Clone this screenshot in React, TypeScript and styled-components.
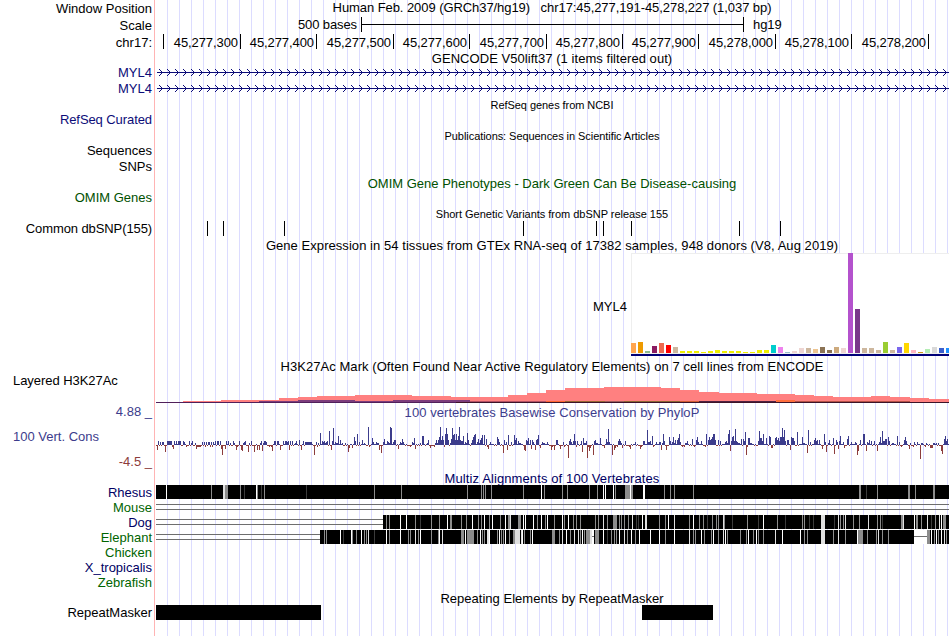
import React from 'react'
import styled, { createGlobalStyle } from 'styled-components'

const GlobalStyle = createGlobalStyle`
  body {
    margin: 0;
    background: #fff;
  }
`

const PLOT_WIDTH = 793

const colors = {
  black: '#000000',
  gene: '#0c0c78',
  omim: '#005000',
  align: '#000064',
  alignAlt: '#006400',
  consUp: '#3c3c8c',
  consDown: '#8c3c3c',
}

const Browser = styled.main`
  width: 949px;
  height: 636px;
  overflow: hidden;
  font-family: 'Liberation Sans', Arial, Helvetica, sans-serif;
  font-size: 13px;
  line-height: 15px;
  color: ${colors.black};
  background:
    linear-gradient(#ffb4b4, #ffb4b4) 154px 0 / 1px 100% no-repeat,
    repeating-linear-gradient(to right, #dcdcff 0 1px, transparent 1px 12px) 167px 0 / 792px 100% no-repeat;
`

const Row = styled.div<{ h: number }>`
  display: grid;
  grid-template-columns: 152px ${PLOT_WIDTH}px;
  column-gap: 4px;
  height: ${({ h }) => h}px;
`

const Label = styled.div<{ color?: string; top?: number; spacing?: number }>`
  padding-top: ${({ top }) => top || 0}px;
  text-align: right;
  white-space: pre;
  letter-spacing: ${({ spacing }) => spacing || 0}px;
  color: ${({ color }) => color || colors.black};
`

const Title = styled(Label)<{ small?: boolean }>`
  padding-right: 1px;
  text-align: center;
  font-size: ${({ small }) => (small ? 11 : 13)}px;
`

const Side = styled.div`
  display: flex;
  flex-direction: column;
  padding-left: 13px;
`

const SideLabel = styled(Label)`
  text-align: left;
`

const Plot = styled.svg`
  display: block;
  shape-rendering: crispEdges;
`

const ScaleRow = styled.div`
  display: flex;
  padding-top: 1px;
`

const ScaleText = styled.span<{ w?: number }>`
  width: ${({ w }) => (w ? `${w}px` : 'auto')};
  letter-spacing: -0.1px;
  text-align: right;
`

const ScaleBar = styled.div`
  box-sizing: border-box;
  width: 383px;
  height: 15px;
  margin: 0 9px 0 4px;
  border: solid #000;
  border-width: 0 1px;
  background: linear-gradient(#000, #000) 0 7px / 100% 1px no-repeat;
`

const Ruler = styled.div`
  display: flex;
  height: 15px;
`

const Tick = styled.div<{ w: number }>`
  box-sizing: border-box;
  width: ${({ w }) => w}px;
  padding: 1px 2px 0 0;
  border-right: 1px solid #000;
  letter-spacing: -0.08px;
  text-align: right;
`

const Expression = styled.div`
  display: flex;
`

const ExpressionName = styled.div`
  width: 471px;
  margin-right: 4px;
  padding-top: 46px;
  text-align: right;
`

const ticks: [number, string][] = [
  [8, ''],
  [77, '45,277,300'],
  [76, '45,277,400'],
  [77, '45,277,500'],
  [76, '45,277,600'],
  [77, '45,277,700'],
  [76, '45,277,800'],
  [76, '45,277,900'],
  [77, '45,278,000'],
  [76, '45,278,100'],
  [77, '45,278,200'],
]

const snps = [51, 67, 128, 367, 440, 447, 475, 583, 624]

const tissues: [string, number][] = [
  ['#ffa54f', 10], ['#ee9a00', 11], ['#8fbc8f', 2], ['#8b1c62', 7], ['#ee6a50', 10], ['#ff0000', 8],
  ['#cdb79e', 6], ['#eeee00', 2], ['#eeee00', 2], ['#eeee00', 2], ['#eeee00', 1], ['#eeee00', 2],
  ['#eeee00', 3], ['#eeee00', 2], ['#eeee00', 2], ['#eeee00', 2], ['#eeee00', 1], ['#eeee00', 1],
  ['#eeee00', 3], ['#eeee00', 3], ['#00cdcd', 8], ['#ee82ee', 6], ['#9ac0cd', 1], ['#eed5d2', 2],
  ['#eed5d2', 5], ['#cdb79e', 5], ['#eec591', 4], ['#8b7355', 6], ['#8b7355', 3], ['#cdaa7d', 6],
  ['#eed5d2', 5], ['#b452cd', 100], ['#7a378b', 44], ['#cdb79e', 5], ['#cdb79e', 5], ['#cdb79e', 3],
  ['#9acd32', 11], ['#cdb79e', 3], ['#7a67ee', 6], ['#ffd700', 10], ['#ffb6c1', 3], ['#cd9b1d', 1],
  ['#b4eeb4', 4], ['#d9d9d9', 6], ['#3a5fcd', 5], ['#1e90ff', 5],
]

// [start, height] of each step of the H3K27Ac signal
const h3k27ac: [number, number][] = [
  [27, 1], [65, 2], [123, 4], [142, 5], [161, 6], [199, 7], [256, 6], [295, 5], [352, 7], [371, 9],
  [390, 12], [409, 14], [448, 15], [505, 14], [524, 12], [543, 10], [563, 9], [601, 8], [639, 7],
  [658, 6], [677, 5], [715, 6], [734, 5], [754, 4], [773, 3], [793, 0],
]

// weaker cell lines drawn over the main signal: [x, y, width, height, color]
const h3k27acLow: [number, number, number, number, string][] = [
  [103, 27, 39, 1, '#7c3c7c'],
  [142, 26, 57, 2, '#7c3c7c'],
  [199, 27, 38, 1, '#7c3c7c'],
  [237, 26, 77, 2, '#7c3c7c'],
  [314, 27, 76, 1, '#b45064'],
  [390, 27, 19, 1, '#ff6432'],
  [409, 27, 40, 1, '#966432'],
  [449, 27, 19, 1, '#a05c5c'],
  [468, 27, 56, 1, '#8c6432'],
  [524, 27, 19, 1, '#d25a32'],
  [543, 27, 77, 1, '#502040'],
  [620, 26, 19, 2, '#ff6e3c'],
  [639, 27, 115, 1, '#b45046'],
]

// conservation scores that stand out, as "offset:height"
const peaks = `
0:-1 1:-5 2:4 3:-1 4:3 5:-1 6:3 7:3 8:-1 9:-7 10:-1 11:4 12:4 13:4 14:4 15:4 16:-2 17:-4 18:4 19:1 20:4
21:1 22:4 23:4 24:4 25:-1 26:-1 27:4 28:3 29:1 30:-2 31:-1 32:-1 33:4 34:-1 35:2 36:4 37:-1 38:-1 39:2
40:-4 41:-2 42:-2 43:-2 44:-2 45:-1 46:3 47:-1 48:3 49:-2 50:3 51:-1 52:3 53:3 54:-2 55:3 56:-2 57:3
58:1 59:4 60:-1 61:4 62:4 63:-1 64:4 65:-4 66:-10 67:-1 68:-1 69:-4 70:4 71:1 72:4 73:-1 74:2 75:-1
76:-1 77:4 78:2 79:-1 80:-5 81:-2 82:-1 83:4 84:-1 85:-5 86:-6 87:2 88:3 89:4 90:-1 91:-1 92:-7 93:2
94:-1 95:4 96:-1 97:-1 98:-7 99:-1 100:1 101:-5 102:-1 103:-5 104:2 105:4 106:-6 107:2 108:4 109:4
110:3 111:-1 112:-1 113:-2 114:-1 115:-2 116:-6 117:1 118:4 119:4 120:-1 121:4 122:4 123:1 124:-5
125:-1 126:-1 127:4 128:1 129:4 130:4 131:3 132:4 133:-5 134:4 135:-1 136:4 137:-1 138:1 139:2 140:4
141:1 142:-1 143:5 144:-1 145:-5 146:1 147:4 148:-1 149:3 150:3 151:3 152:3 153:3 154:3 155:3 156:1
157:-1 158:-10 159:-1 160:3 161:-2 162:2 164:12 166:4 168:4 170:3 171:4 173:14 175:-5 176:4 177:17
179:3 182:9 184:5 186:2 189:2 192:-7 193:-3 196:-3 198:8 199:4 201:11 203:3 206:5 208:2 212:18 216:7
217:3 223:-5 225:-8 227:3 228:6 231:4 234:18 235:17 237:3 238:5 239:5 242:-4 244:3 246:6 247:3 258:7
259:-4 264:2 266:9 267:9 271:2 272:5 274:-3 279:2 280:5 281:2 282:5 283:8 284:18 285:5 286:9 287:5
288:-2 289:11 290:17 291:11 292:5 294:2 295:6 296:17 297:10 298:11 299:5 300:11 301:5 302:9 303:18
304:5 305:4 306:4 307:9 311:12 312:5 315:2 316:5 317:8 318:10 319:11 322:6 324:5 325:7 326:10 328:10
330:6 332:-4 334:3 341:8 342:6 343:3 347:-8 348:5 351:-5 352:10 355:3 358:10 359:5 360:7 362:4 368:-5
369:-6 370:5 371:4 372:7 374:5 375:-4 376:5 377:3 379:-5 380:5 381:6 382:10 384:-3 391:3 395:-5 398:-5
400:5 401:5 404:-4 407:3 412:-13 413:4 414:6 417:4 418:11 419:4 421:4 425:4 426:-7 427:7 430:4 431:-13
433:-6 434:-3 437:-10 438:4 439:5 444:7 448:-3 450:6 452:16 453:3 456:-10 458:-5 459:-3 462:4 463:6
464:4 466:-3 469:4 474:-4 479:3 484:-4 487:4 488:4 491:15 493:3 494:4 496:9 500:3 503:3 505:-5 507:11
508:4 510:-5 513:8 514:4 517:8 519:5 521:5 522:7 523:11 524:3 528:-2 531:4 536:6 540:5 541:8 542:3
545:4 549:-2 550:11 552:5 553:8 554:5 555:6 556:8 557:11 558:11 559:5 562:5 564:4 570:4 572:11 573:15
574:-6 575:4 576:8 577:9 578:4 579:16 580:4 585:6 587:6 588:4 589:13 590:-10 592:7 593:7 602:4 603:14
604:7 605:7 606:4 607:11 610:7 613:9 614:8 615:-3 616:-3 619:7 620:8 621:5 622:7 623:4 624:8 625:8
626:17 627:8 628:15 629:4 631:5 632:5 634:-5 635:8 636:7 637:7 638:4 641:13 646:8 651:-8 652:15 654:3
658:5 659:7 660:4 661:5 663:5 666:-4 668:11 669:3 670:-7 673:5 677:7 678:-9 680:5 681:3 682:-4 683:4
684:9 688:-3 691:6 692:9 695:3 701:-10 702:-6 704:5 707:11 708:11 710:-6 713:5 715:4 718:4 721:-6
724:8 726:14 727:4 728:4 729:6 730:6 732:8 733:4 741:9 743:3 748:5 749:8 750:4 753:-4 754:2 758:3
761:3 764:-14 770:2 774:-3 775:-3 776:-3 780:2 782:2 785:-6 786:-9 788:6 789:9 790:4 791:6`

const filler = [1, -1, 1, 2, -1, 1, 3, -1, -2, 1, 1, -1, -1, 2, 1, -1, 1]

const scores = Array.from({ length: PLOT_WIDTH }, (_, i) => filler[(i * 7 + (i >> 4)) % filler.length])
peaks.trim().split(/\s+/).forEach((p) => {
  const [x, v] = p.split(':').map(Number)
  scores[x] = v
})

const shades: Record<string, string> = { w: '#ffffff', l: '#e0e0e0', g: '#8c8c8c', d: '#3c3c3c' }

type Species = {
  name: string
  color: string
  lines?: number
  blocks?: [number, number][]
  stripes?: string
  gaps?: [number, number][]
}

// stripes: offset, shade letter, optional width
const species: Species[] = [
  {
    name: 'Rhesus',
    color: colors.align,
    blocks: [[0, 793]],
    stripes: `10w 55g 67l2 69g3 84g 88d 100w 101g 105d 108g 150d 218g 245g 311g 325g 327g 329g 335g 367g 385w
      388g 406g 411g 433g 441g 447w 449w 457w 459g 469g5 474w 475g2 487w2 508g 514g 518g 537g 703g2 710d
      721g 752g2 759g 777g2`,
  },
  { name: 'Mouse', color: colors.alignAlt, lines: 793 },
  {
    name: 'Dog',
    color: colors.align,
    lines: 227,
    blocks: [[227, 566]],
    stripes: `230g 233g 244w 250w 259g 264d 275g 283g 291w 294g2 305g 310g 316w 322g 325g 328w 333g 336w 344g
      349w 352g2 354l 362g3 367w 369w 377w 381g 385w 389g 391w 398g 406w 408g 412w 417g 420g 424g 439g 442g
      447l 451g 457g4 463g 465g 468g 472g 476l 480d 482d 486w 489l2 503g 509g 512w 518l 533g 537w 543g 547g
      551d 556g 560g 562g 567l 568g 576d 591g 602d 607w 621g 629d 646g 648g 653d 657d 665l4 678d 682l 684g
      687g 689l 697g 703g 712l 721g 724g 726d 745g2 747l 758w 760g2 765g 771l 775d 779g 783l 785w 787g3`,
  },
  {
    name: 'Elephant',
    color: colors.alignAlt,
    lines: 164,
    blocks: [[164, 594], [771, 22]],
    gaps: [[436, 2], [758, 13]],
    stripes: `168g 170g 184w 187d 195w 196g 200g 205w 208g 210g 212l 218d 230w 233g 244w 252g 254g 259l 262g
      264w 275g 282g 283w 286l 305g2 307g 309w 311g7 321g 324w 326g 328g 331l2 333w 341g 343w 345g 347g 349w
      353g 357g2 359l5 365l 366w 368g 374g 376w 396g3 403g 406l 410w 414g 418l 422l 424g 426w 428g 430g4
      434l2 439g4 447w 451d 455g 458g 460g 463w 468l 471g 475w 479g 483w 494w 503w 509g 518w 533l 537g 539g
      545w 548g 555g 557w 562g 567l 569w 571g 584g 590g 592w 597g 600w 602g 607g 619l 626w 644w 648g 651g
      665l4 677g 682l 689g 701w 702g5 711g 720g 722l 726g 732g 771g3 775w 778g 780w 782g 785w 788l 790g`,
  },
  { name: 'Chicken', color: colors.alignAlt },
  { name: 'X_tropicalis', color: colors.align },
  { name: 'Zebrafish', color: colors.alignAlt },
]

function GeneTrack() {
  return (
    <Row h={16}>
      <Label color={colors.gene} top={1}>MYL4</Label>
      <Plot width={PLOT_WIDTH} height={16}>
        <rect x={1} y={8} width={792} height={1} fill={colors.gene} />
        {Array.from({ length: 99 }, (_, i) =>
          [-3, -2, -1, 1, 2, 3].map((d) => (
            <rect
              key={`${i}${d}`}
              x={6 + i * 8 - Math.abs(d)}
              y={8 + d}
              width={1}
              height={1}
              fill={colors.gene}
            />
          ))
        )}
      </Plot>
    </Row>
  )
}

function ExpressionTrack() {
  return (
    <Row h={104}>
      <span />
      <Expression>
        <ExpressionName>MYL4</ExpressionName>
        <Plot width={318} height={103}>
          <rect width={318} height={103} fill="#fff" />
          <path d="M0 0H318V1H1V100H318V101H0Z" fill="#eeeeee" />
          {tissues.map(([fill, h], i) => (
            <rect key={i} x={i * 7} y={100 - h} width={5} height={h} fill={fill} />
          ))}
          <rect y={101} width={318} height={2} fill="#000078" />
        </Plot>
      </Expression>
    </Row>
  )
}

function LayeredTrack() {
  return (
    <Row h={31}>
      <Side>
        <SideLabel spacing={-0.05}>Layered H3K27Ac</SideLabel>
      </Side>
      <Plot width={PLOT_WIDTH} height={31} viewBox={`0 -1 ${PLOT_WIDTH} 31`}>
        {h3k27ac.slice(0, -1).map(([x, h], i) => (
          <rect key={x} x={x} y={28 - h} width={h3k27ac[i + 1][0] - x} height={h} fill="#ff8080" />
        ))}
        {h3k27acLow.map(([x, y, w, h, fill]) => (
          <rect key={x} x={x} y={y} width={w} height={h} fill={fill} />
        ))}
        <rect y={28} width={300} height={1} fill="#50205a" />
        <rect x={300} y={28} width={493} height={1} fill="#3c1428" />
      </Plot>
    </Row>
  )
}

function ConservationTrack() {
  return (
    <Row h={51}>
      <Side>
        <SideLabel color={colors.consUp} top={9}>100 Vert. Cons</SideLabel>
        <Label color={colors.consDown} top={10}>-4.5 _</Label>
      </Side>
      <Plot width={PLOT_WIDTH} height={51}>
        {scores.map((v, x) => (
          <rect
            key={x}
            x={x}
            y={v > 0 ? 25 - v : 25}
            width={1}
            height={Math.abs(v)}
            fill={v > 0 ? colors.consUp : colors.consDown}
          />
        ))}
      </Plot>
    </Row>
  )
}

function AlignmentTrack({ name, color, lines, blocks = [], stripes = '', gaps = [] }: Species) {
  return (
    <Row h={15}>
      <Label color={color}>{name}</Label>
      <Plot width={PLOT_WIDTH} height={15}>
        {lines && <path d={`M0 4H${lines}V5H0ZM0 9H${lines}V10H0Z`} fill="#6e6e6e" />}
        {blocks.map(([x, w]) => (
          <rect key={x} x={x} width={w} height={14} fill="#000" />
        ))}
        {(stripes.match(/\d+[wlgd]\d*/g) || []).map((s) => {
          const [, x, shade, w] = s.match(/(\d+)([wlgd])(\d*)/)!
          return <rect key={s} x={x} width={w || 1} height={14} fill={shades[shade]} />
        })}
        {gaps.map(([x, w]) => (
          <g key={x}>
            <rect x={x} width={w} height={14} fill="#fff" />
            <rect x={x} y={6} width={w} height={1} fill="#6e6e6e" />
          </g>
        ))}
      </Plot>
    </Row>
  )
}

export default function App() {
  return (
    <>
      <GlobalStyle />
      <Browser>
        <Row h={16}>
          <Label top={1}>Window Position</Label>
          <Title spacing={-0.07}>
            {'Human Feb. 2009 (GRCh37/hg19)   chr17:45,277,191-45,278,227 (1,037 bp)'}
          </Title>
        </Row>
        <Row h={18}>
          <Label top={2}>Scale</Label>
          <ScaleRow>
            <ScaleText w={201}>500 bases</ScaleText>
            <ScaleBar />
            <ScaleText>hg19</ScaleText>
          </ScaleRow>
        </Row>
        <Row h={16}>
          <Label top={1}>chr17:</Label>
          <Ruler>
            {ticks.map(([w, text]) => (
              <Tick key={text} w={w}>{text}</Tick>
            ))}
          </Ruler>
        </Row>
        <Row h={14}>
          <span />
          <Title top={1} spacing={0.05}>GENCODE V50lift37 (1 items filtered out)</Title>
        </Row>
        <GeneTrack />
        <GeneTrack />
        <Row h={16}>
          <span />
          <Title small top={2} spacing={-0.06}>RefSeq genes from NCBI</Title>
        </Row>
        <Row h={15}>
          <Label color={colors.gene} spacing={-0.08}>RefSeq Curated</Label>
        </Row>
        <Row h={16}>
          <span />
          <Title small top={2} spacing={-0.06}>Publications: Sequences in Scientific Articles</Title>
        </Row>
        <Row h={15}>
          <Label>Sequences</Label>
        </Row>
        <Row h={16}>
          <Label top={1}>SNPs</Label>
        </Row>
        <Row h={16}>
          <span />
          <Title color={colors.omim} top={2}>OMIM Gene Phenotypes - Dark Green Can Be Disease-causing</Title>
        </Row>
        <Row h={15}>
          <Label color={colors.omim}>OMIM Genes</Label>
        </Row>
        <Row h={16}>
          <span />
          <Title small top={2} spacing={-0.02}>Short Genetic Variants from dbSNP release 155</Title>
        </Row>
        <Row h={15}>
          <Label spacing={-0.1}>Common dbSNP(155)</Label>
          <Plot width={PLOT_WIDTH} height={15}>
            {snps.map((x) => (
              <rect key={x} x={x} width={1} height={15} />
            ))}
          </Plot>
        </Row>
        <Row h={17}>
          <span />
          <Title top={2} spacing={0.055}>
            Gene Expression in 54 tissues from GTEx RNA-seq of 17382 samples, 948 donors (V8, Aug 2019)
          </Title>
        </Row>
        <ExpressionTrack />
        <Row h={16}>
          <span />
          <Title top={2} spacing={0.065}>
            H3K27Ac Mark (Often Found Near Active Regulatory Elements) on 7 cell lines from ENCODE
          </Title>
        </Row>
        <LayeredTrack />
        <Row h={16}>
          <Label color={colors.consUp}>4.88 _</Label>
          <Title color={colors.consUp} top={1} spacing={0.06}>
            100 vertebrates Basewise Conservation by PhyloP
          </Title>
        </Row>
        <ConservationTrack />
        <Row h={14}>
          <span />
          <Title color={colors.align} spacing={0.11}>Multiz Alignments of 100 Vertebrates</Title>
        </Row>
        {species.map((s) => (
          <AlignmentTrack key={s.name} {...s} />
        ))}
        <Row h={15}>
          <span />
          <Title top={1} spacing={0.02}>Repeating Elements by RepeatMasker</Title>
        </Row>
        <Row h={15}>
          <Label>RepeatMasker</Label>
          <Plot width={PLOT_WIDTH} height={15}>
            <rect width={165} height={15} />
            <rect x={486} width={71} height={15} />
          </Plot>
        </Row>
      </Browser>
    </>
  )
}
